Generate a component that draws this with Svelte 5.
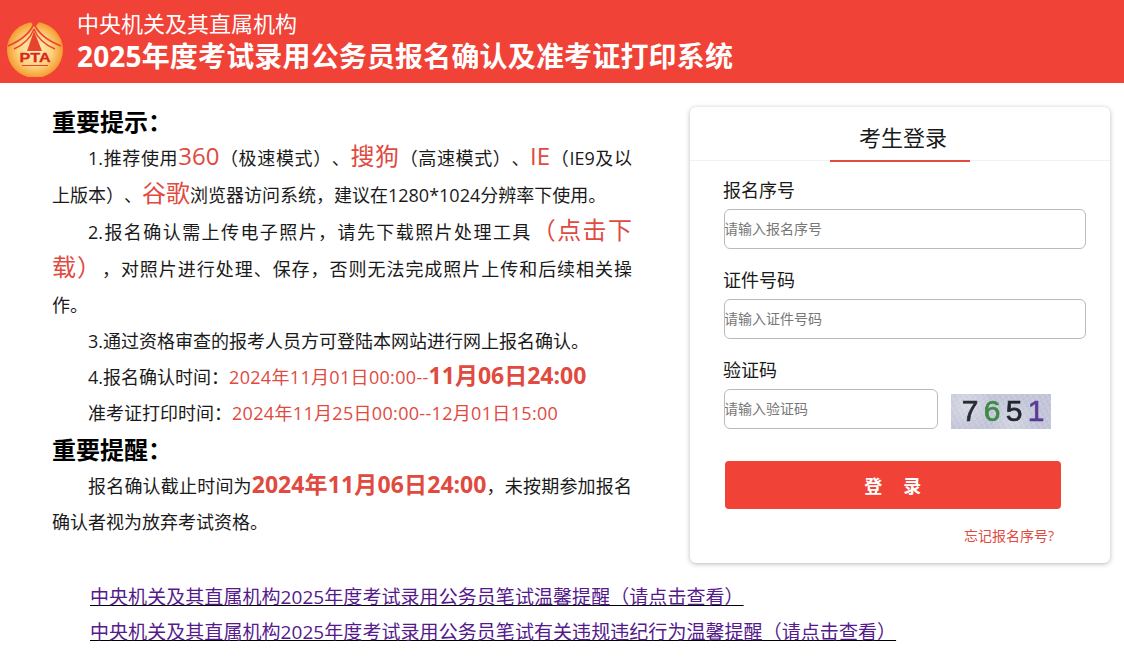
<script>
    const fields = [
        { label: "报名序号", hint: "请输入报名序号" },
        { label: "证件号码", hint: "请输入证件号码" }
    ];
    const digits = [
        { ch: "7", color: "#2a2c33" },
        { ch: "6", color: "#3d8a45" },
        { ch: "5", color: "#23252e" },
        { ch: "1", color: "#5b3a96" }
    ];
</script>

<style>
    :global(body) {
        margin: 0;
        background: #fff;
        overflow: hidden;
    }

    .page {
        font-family: "Open Sans", "Noto Sans CJK SC", sans-serif;
        color: #1a1a1a;
        width: 1124px;
        height: 660px;
        overflow: hidden;
        text-spacing-trim: space-all;
    }

    .top {
        height: 83px;
        background: #f04237;
        display: flex;
        align-items: center;
        color: #fff;
    }

    .logo {
        width: 70px;
        height: 70px;
        margin-right: 7px;
        flex: none;
    }

    .names {
        display: flex;
        flex-direction: column;
    }

    .org {
        font-size: 22px;
        line-height: 29px;
    }

    .sys {
        font-size: 28px;
        line-height: 36px;
        font-weight: 700;
        letter-spacing: 0.16px;
        white-space: nowrap;
    }

    .main {
        display: flex;
        align-items: flex-start;
        padding: 24px 14px 0 52px;
    }

    .notes {
        width: 580px;
        margin-right: 58px;
        font-size: 18px;
    }

    .notes h2 {
        margin: 0;
        font-size: 24px;
        line-height: 30px;
        font-weight: 700;
        color: #000;
    }

    .notes h2.second {
        margin: 4px 0 3px;
    }

    .notes p {
        margin: 0;
        line-height: 36px;
        text-indent: 36px;
        text-align: justify;
    }

    .first {
        padding-top: 2px;
    }

    .red {
        color: #e04a3f;
    }

    .date {
        letter-spacing: 0.32px;
    }

    .big {
        font-size: 24px;
        line-height: 34px;
    }

    .strong {
        font-size: 23px;
        line-height: 30px;
        font-weight: 700;
    }

    .card {
        width: 420px;
        height: 456px;
        box-sizing: border-box;
        background: #fff;
        border-radius: 6px;
        box-shadow: 0 1px 5px rgba(0, 0, 0, 0.28);
    }

    .title {
        height: 53px;
        border-bottom: 1px solid #f0f0f0;
        display: flex;
        justify-content: center;
    }

    .title span {
        width: 140px;
        height: 55px;
        box-sizing: border-box;
        border-bottom: 2px solid #e04a3f;
        padding-left: 6px;
        text-align: center;
        font-size: 22px;
        line-height: 61px;
    }

    .form {
        padding: 13px 24px 0 34px;
    }

    .field {
        height: 90px;
    }

    .field label {
        display: block;
        margin-left: -1px;
        padding-bottom: 3px;
        font-size: 18px;
        line-height: 32px;
    }

    input {
        display: block;
        box-sizing: border-box;
        width: 362px;
        height: 40px;
        padding: 0 0 2px;
        border: 1px solid #bbb;
        border-radius: 6px;
        font-family: inherit;
        font-size: 14px;
        text-indent: -1px;
        outline: none;
    }

    input::placeholder {
        color: #777;
    }

    .code {
        display: flex;
        align-items: flex-end;
    }

    .code input {
        width: 214px;
    }

    .captcha {
        width: 100px;
        height: 35px;
        box-sizing: border-box;
        margin-left: 13px;
        padding: 0 0 2px 4px;
        display: flex;
        justify-content: center;
        align-items: center;
        background:
            radial-gradient(circle at 15% 30%, rgba(255, 255, 255, 0.35), transparent 30%),
            radial-gradient(circle at 62% 75%, rgba(255, 255, 255, 0.3), transparent 35%),
            repeating-linear-gradient(63deg, rgba(255, 255, 255, 0.1) 0 2px, transparent 2px 5px),
            repeating-linear-gradient(-37deg, rgba(110, 115, 150, 0.08) 0 1px, transparent 1px 4px),
            #c3c6d8;
        font-family: "Liberation Sans", sans-serif;
        font-size: 30px;
        line-height: 33px;
    }

    .captcha span {
        width: 22px;
        text-align: center;
        -webkit-text-stroke: 0.7px currentColor;
        filter: blur(0.5px);
    }

    .login {
        display: block;
        width: 336px;
        height: 48px;
        margin: 17px 0 0 1px;
        border: 0;
        border-radius: 4px;
        background: #f04237;
        color: #fff;
        font-family: inherit;
        font-size: 18px;
        font-weight: 700;
        letter-spacing: 0.5px;
        white-space: pre;
        cursor: pointer;
    }

    .forgot {
        display: block;
        width: 330px;
        margin-top: 17px;
        text-align: right;
        font-size: 14px;
        line-height: 20px;
        color: #e04a3f;
        text-decoration: none;
    }

    .links {
        padding: 17px 0 0 90px;
        font-size: 19px;
        line-height: 35px;
        letter-spacing: 0.06px;
    }

    .links a {
        display: block;
        color: #551a8b;
        text-decoration: underline #000;
        white-space: nowrap;
    }
</style>

<div class="page">
    <header class="top">
        <svg class="logo" viewBox="0 0 70 70" aria-label="PTA">
            <defs>
                <radialGradient id="disc" cx="50%" cy="50%" r="50%">
                    <stop offset="0" stop-color="#fff3c4" />
                    <stop offset="0.6" stop-color="#fdd27e" />
                    <stop offset="1" stop-color="#f59b2e" />
                </radialGradient>
            </defs>
            <circle cx="35" cy="43" r="28" fill="url(#disc)" />
            <path d="M29 13 L35 20 L41 13 L35 10 Z" fill="#f04237" />
            <path d="M34 16 C31 25 22 33 8 39" fill="none" stroke="#f04237" stroke-width="1.8" />
            <path d="M34 16 C37 25 46 33 61 39" fill="none" stroke="#f04237" stroke-width="1.8" />
            <path d="M34 22 C31 30 25 37 14 42" fill="none" stroke="#e8432f" stroke-width="1.4" />
            <path d="M34 22 C37 30 43 37 55 42" fill="none" stroke="#e8432f" stroke-width="1.4" />
            <path d="M34 24 L42 44 L27 44 Z" fill="#e8432f" />
            <text x="35" y="55" text-anchor="middle" font-family="Liberation Sans, sans-serif" font-size="12" font-weight="700" fill="#d9261c" stroke="#d9261c" stroke-width="0.3" textLength="31" lengthAdjust="spacingAndGlyphs">PTA</text>
            <rect x="22" y="58" width="26" height="1" fill="#e8432f" />
        </svg>
        <div class="names">
            <span class="org">中央机关及其直属机构</span>
            <span class="sys">2025年度考试录用公务员报名确认及准考证打印系统</span>
        </div>
    </header>

    <main class="main">
        <section class="notes">
            <h2>重要提示：</h2>
            <p class="first">1.推荐使用<span class="red big">360</span>（极速模式）、<span class="red big">搜狗</span>（高速模式）、<span class="red big">IE</span>（IE9及以上版本）、<span class="red big">谷歌</span>浏览器访问系统，建议在1280*1024分辨率下使用。</p>
            <p>2.报名确认需上传电子照片，请先下载照片处理工具<span class="red big">（点击下载）</span>，对照片进行处理、保存，否则无法完成照片上传和后续相关操作。</p>
            <p>3.通过资格审查的报考人员方可登陆本网站进行网上报名确认。</p>
            <p>4.报名确认时间：<span class="red date">2024年11月01日00:00--</span><span class="red strong">11月06日24:00</span></p>
            <p>准考证打印时间：<span class="red date">2024年11月25日00:00--12月01日15:00</span></p>
            <h2 class="second">重要提醒：</h2>
            <p>报名确认截止时间为<span class="red strong">2024年11月06日24:00</span>，未按期参加报名确认者视为放弃考试资格。</p>
        </section>

        <section class="card">
            <div class="title"><span>考生登录</span></div>
            <form class="form">
                {#each fields as f}
                    <div class="field">
                        <label for={f.label}>{f.label}</label>
                        <input id={f.label} placeholder={f.hint} />
                    </div>
                {/each}
                <div class="field">
                    <label for="yzm">验证码</label>
                    <div class="code">
                        <input id="yzm" placeholder="请输入验证码" />
                        <div class="captcha">
                            {#each digits as d}
                                <span style="color: {d.color}">{d.ch}</span>
                            {/each}
                        </div>
                    </div>
                </div>
                <button class="login" type="button">登    录</button>
                <a class="forgot" href="#top">忘记报名序号?</a>
            </form>
        </section>
    </main>

    <nav class="links">
        <a href="#top">中央机关及其直属机构2025年度考试录用公务员笔试温馨提醒（请点击查看）</a>
        <a href="#top">中央机关及其直属机构2025年度考试录用公务员笔试有关违规违纪行为温馨提醒（请点击查看）</a>
    </nav>
</div>
